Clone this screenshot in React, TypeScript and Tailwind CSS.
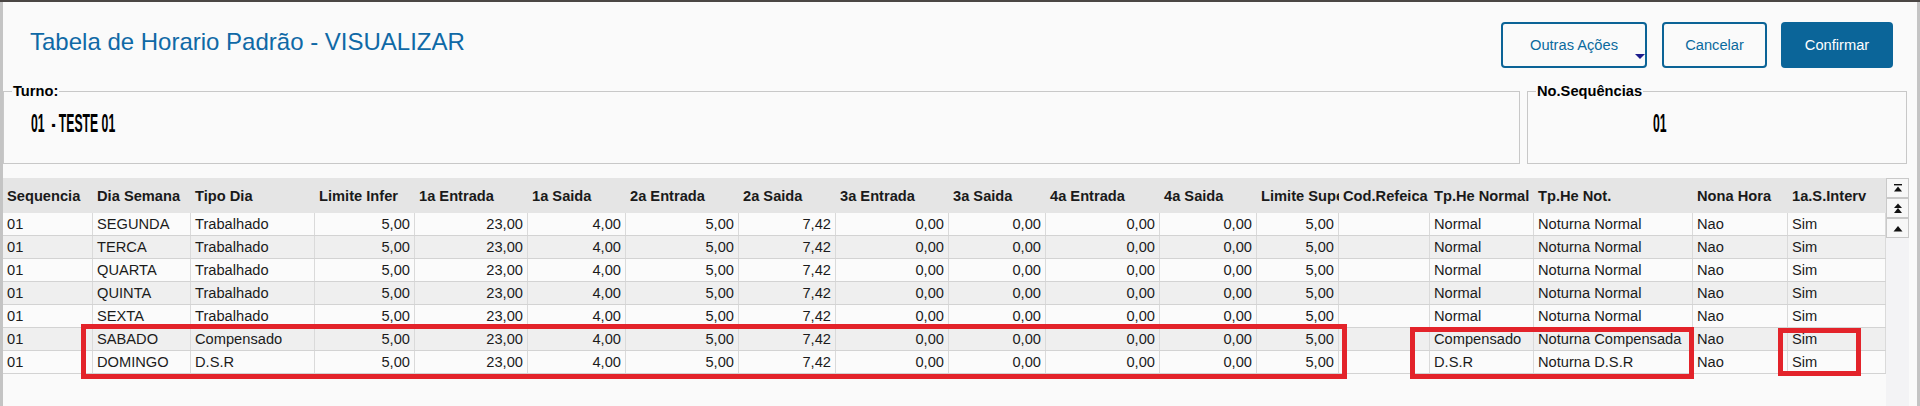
import React from 'react';

type Col = { label: string; w: string; num?: boolean };

// column widths follow the grid of the schedule table
const cols: Col[] = [
  { label: 'Sequencia', w: 'w-[90px]' },
  { label: 'Dia Semana', w: 'w-[98px]' },
  { label: 'Tipo Dia', w: 'w-[124px]' },
  { label: 'Limite Infer', w: 'w-[100px]', num: true },
  { label: '1a Entrada', w: 'w-[113px]', num: true },
  { label: '1a Saida', w: 'w-[98px]', num: true },
  { label: '2a Entrada', w: 'w-[113px]', num: true },
  { label: '2a Saida', w: 'w-[97px]', num: true },
  { label: '3a Entrada', w: 'w-[113px]', num: true },
  { label: '3a Saida', w: 'w-[97px]', num: true },
  { label: '4a Entrada', w: 'w-[114px]', num: true },
  { label: '4a Saida', w: 'w-[97px]', num: true },
  { label: 'Limite Superior', w: 'w-[82px]', num: true },
  { label: 'Cod.Refeica', w: 'w-[91px]' },
  { label: 'Tp.He Normal', w: 'w-[104px]' },
  { label: 'Tp.He Not.', w: 'w-[159px]' },
  { label: 'Nona Hora', w: 'w-[95px]' },
  { label: '1a.S.Interv', w: 'w-[98px]' },
];

const horas = ['5,00', '23,00', '4,00', '5,00', '7,42', '0,00', '0,00', '0,00', '0,00', '5,00', ''];

const dias: [string, string, string, string][] = [
  ['SEGUNDA', 'Trabalhado', 'Normal', 'Noturna Normal'],
  ['TERCA', 'Trabalhado', 'Normal', 'Noturna Normal'],
  ['QUARTA', 'Trabalhado', 'Normal', 'Noturna Normal'],
  ['QUINTA', 'Trabalhado', 'Normal', 'Noturna Normal'],
  ['SEXTA', 'Trabalhado', 'Normal', 'Noturna Normal'],
  ['SABADO', 'Compensado', 'Compensado', 'Noturna Compensada'],
  ['DOMINGO', 'D.S.R', 'D.S.R', 'Noturna D.S.R'],
];

const rows = dias.map(([dia, tipo, tpNormal, tpNot]) => ['01', dia, tipo, ...horas, tpNormal, tpNot, 'Nao', 'Sim']);

const ScrollBtn = ({ kind }: { kind: 'first' | 'page' | 'up' }) => (
  <button className="flex h-[20px] w-full items-center justify-center border border-[#c9c9c9] bg-[#f7f7f7]">
    <svg width="10" height="11" viewBox="0 0 10 11" fill="#111">
      {kind === 'first' && (
        <>
          <rect x="1" y="1" width="8" height="1.4" />
          <path d="M5 3.5 9 8.5H1Z" />
        </>
      )}
      {kind === 'page' && (
        <>
          <path d="M5 0.5 9 5H1Z" />
          <path d="M5 5 9 10H1Z" />
        </>
      )}
      {kind === 'up' && <path d="M5 3 9.5 8.5H0.5Z" />}
    </svg>
  </button>
);

export default function App() {
  return (
    <div className="relative h-[406px] w-[1920px] overflow-hidden bg-[#fafafa] font-['Liberation_Sans',Arial,sans-serif] text-[14.67px] text-[#1b1b1b]">
      <div className="h-[2px] bg-[#4a4644]" />
      <div className="flex h-[404px]">
        <div className="w-[3px] shrink-0 bg-[#c4c4c4]" />

        <div className="flex min-w-0 flex-1 flex-col">
          {/* title bar */}
          <div className="flex h-[81px] shrink-0 items-start pl-[27px] pr-[16px] pt-[20px]">
            <h1 className="mt-[6px] text-[24px] leading-[28px] text-[#0f69a6]">Tabela de Horario Padrão - VISUALIZAR</h1>
            <div className="ml-auto flex">
              <button className="relative h-[46px] w-[146px] rounded-[4px] border-2 border-[#0b6396] text-[#0b6a9e]">
                Outras Ações
                <svg className="absolute bottom-[7px] right-0" width="10" height="5" viewBox="0 0 10 5">
                  <path d="M0 0h10L5 5Z" fill="#1c1c8c" />
                </svg>
              </button>
              <button className="ml-[15px] h-[46px] w-[105px] rounded-[4px] border-2 border-[#0b6396] text-[#0b6a9e]">
                Cancelar
              </button>
              <button className="ml-[14px] h-[46px] w-[112px] rounded-[4px] bg-[#0b6599] text-white">Confirmar</button>
            </div>
          </div>

          {/* turno / sequencias */}
          <div className="flex h-[81px] shrink-0 gap-[7px] pr-[2px]">
            <fieldset className="h-[81px] min-w-0 flex-1 border border-[#c8c8c8] p-0">
              <legend className="ml-[8px] px-[1px] text-[14.67px] font-bold leading-[17px] text-black">Turno:</legend>
              <div className="mt-[8px] pl-[27px]">
                <span className="inline-block origin-left scale-x-[0.47] whitespace-pre text-[26px] font-bold leading-[30px] text-black">
                  01  - TESTE 01
                </span>
              </div>
            </fieldset>
            <fieldset className="h-[81px] w-[380px] border border-[#c8c8c8] p-0">
              <legend className="ml-[8px] px-[1px] text-[14.67px] font-bold leading-[17px] text-black">No.Sequências</legend>
              <div className="mt-[8px] pl-[125px]">
                <span className="inline-block origin-left scale-x-[0.47] text-[26px] font-bold leading-[30px] text-black">01</span>
              </div>
            </fieldset>
          </div>

          {/* grid */}
          <div className="mt-[14px] flex min-h-0 flex-1">
            <div className="w-[1883px] shrink-0">
              <div className="flex h-[35px] items-center bg-[#e5e5e5] font-bold text-[#1a1a1a]">
                {cols.map((c) => (
                  <div key={c.label} className={`${c.w} shrink-0 overflow-hidden whitespace-nowrap pl-[4px]`}>
                    {c.label}
                  </div>
                ))}
              </div>
              {rows.map((r, i) => (
                <div
                  key={i}
                  className={`flex h-[23px] border-b border-[#d3d3d3] ${i % 2 === 1 ? 'bg-[#efefef]' : 'bg-[#fbfbfb]'}`}
                >
                  {r.map((v, j) => (
                    <div
                      key={j}
                      className={`${cols[j].w} shrink-0 overflow-hidden whitespace-nowrap border-r border-[#dadada] leading-[22px] ${
                        cols[j].num ? 'pr-[4px] text-right' : 'pl-[4px]'
                      }`}
                    >
                      {v}
                    </div>
                  ))}
                </div>
              ))}
            </div>
            <div className="flex w-[23px] shrink-0 flex-col bg-[#f3f3f5]">
              <ScrollBtn kind="first" />
              <ScrollBtn kind="page" />
              <ScrollBtn kind="up" />
            </div>
          </div>
        </div>

        <div className="w-[8px] shrink-0" />
        <div className="w-[3px] shrink-0 bg-[#c4c4c4]" />
      </div>

      {/* highlight marks over the weekend rows */}
      <div className="absolute left-[81px] top-[324px] h-[55px] w-[1266px] border-[5px] border-[#e3232a]" />
      <div className="absolute left-[1410px] top-[327px] h-[52px] w-[284px] border-[5px] border-[#e3232a]" />
      <div className="absolute left-[1778px] top-[328px] h-[48px] w-[83px] border-[5px] border-[#e3232a]" />
    </div>
  );
}
